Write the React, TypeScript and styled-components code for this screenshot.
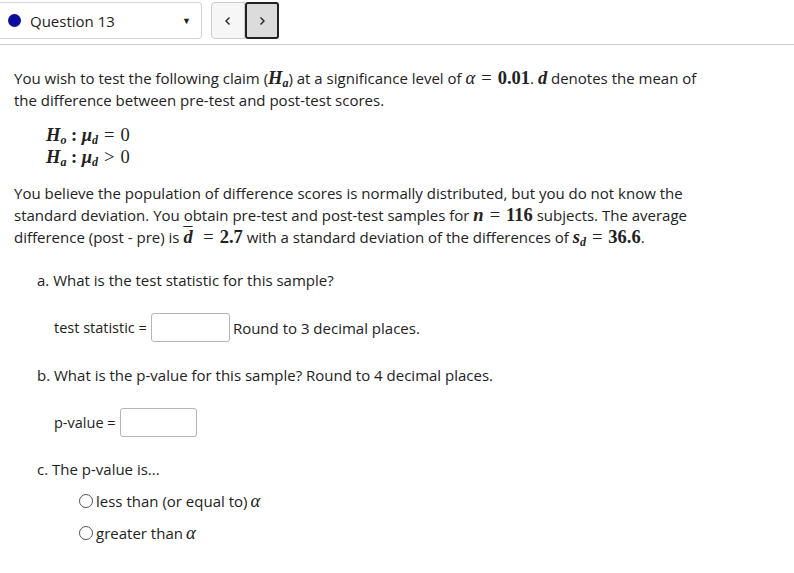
import React from "react";
import styled, { createGlobalStyle } from "styled-components";

const GlobalStyle = createGlobalStyle`
  body {
    margin: 0;
    background: #fff;
    font-family: "Open Sans", "Noto Sans", sans-serif;
    color: #222;
  }
`;

const SPage = styled.div`
  width: 794px;
  height: 573px;
  overflow: hidden;
`;

const SHeader = styled.div`
  display: flex;
  align-items: center;
  gap: 9px;
  height: 37px;
  padding-top: 2px;
  padding-bottom: 5px;
  border-bottom: 1px solid #ccc;
`;

const SSelect = styled.div`
  box-sizing: border-box;
  width: 202px;
  height: 37px;
  display: flex;
  align-items: center;
  padding: 0 10px 0 8px;
  border: 1px solid #d4d4d4;
  border-left: none;
  border-radius: 0 4px 4px 0;
  font-size: 15px;
  color: #222;
`;

const SDot = styled.span`
  width: 13px;
  height: 13px;
  border-radius: 50%;
  background: #0b0b9c;
  margin-right: 9px;
`;

const SSelectLabel = styled.span`
  flex: 1;
`;

const SCaret = styled.span`
  font-size: 9px;
  color: #222;
`;

const SNav = styled.div`
  display: flex;
  height: 37px;
`;

const SNavButton = styled.div<{ active?: boolean }>`
  box-sizing: border-box;
  width: 34px;
  height: 37px;
  display: flex;
  align-items: center;
  justify-content: center;
  background: ${(p) => (p.active ? "#dcdcdc" : "#f6f6f6")};
  border: ${(p) => (p.active ? "2px solid #222" : "1px solid #ccc")};
  border-radius: ${(p) => (p.active ? "3px" : "4px 0 0 4px")};
  & svg {
    width: 10px;
    height: 10px;
  }
`;

const SBody = styled.div`
  width: 706px;
  padding: 22px 14px 0;
  font-size: 15px;
  line-height: 22px;
`;

const SPara = styled.p`
  margin: 0;
`;

const SMath = styled.span<{ bold?: boolean; italic?: boolean }>`
  font-family: "Liberation Serif", "DejaVu Serif", serif;
  font-size: 18.5px;
  line-height: 1;
  font-weight: ${(p) => (p.bold ? 700 : 400)};
  font-style: ${(p) => (p.italic ? "italic" : "normal")};
`;

const SOp = styled.span`
  font-family: "Liberation Serif", "DejaVu Serif", serif;
  font-size: 18.5px;
  line-height: 1;
  margin: 0 6px;
`;

const SBar = styled.span`
  text-decoration: overline;
`;

const SSub = styled.sub`
  font-size: 12px;
  line-height: 1;
  vertical-align: -3px;
  font-style: italic;
`;

const SHyp = styled.div`
  padding: 13px 0 14px 32px;
`;

const SPart = styled.div`
  padding-left: 23px;
`;

const SQuestion = styled.div<{ top: number }>`
  margin-top: ${(p) => p.top}px;
`;

const SAnswerRow = styled.div`
  display: flex;
  align-items: center;
  gap: 4px;
  margin-top: 22px;
  padding-left: 17px;
  font-size: 14.5px;
`;

const SInput = styled.div<{ w: number }>`
  box-sizing: border-box;
  width: ${(p) => p.w}px;
  height: 29px;
  border: 1px solid #b5b5b5;
  border-radius: 3px;
  background: #fff;
`;

const SHint = styled.span`
  font-size: 15px;
  margin-left: -1px;
`;

const SOptions = styled.div`
  padding-left: 42px;
  margin-top: 10px;
  display: flex;
  flex-direction: column;
  gap: 10px;
`;

const SOption = styled.label`
  display: flex;
  align-items: center;
  gap: 3px;
  line-height: 22px;
`;

const SRadio = styled.span`
  box-sizing: border-box;
  width: 14px;
  height: 14px;
  border-radius: 50%;
  border: 1px solid #555;
  background: #fff;
`;

const Chevron = ({ dir }: { dir: "l" | "r" }) => (
  <svg viewBox="0 0 10 10" fill="none" stroke="#222" strokeWidth="1.4">
    {dir === "l" ? <path d="M6.5 1.5 L3 5 L6.5 8.5" /> : <path d="M3.5 1.5 L7 5 L3.5 8.5" />}
  </svg>
);

const App = () => (
  <SPage>
    <GlobalStyle />
    <SHeader>
      <SSelect>
        <SDot />
        <SSelectLabel>Question 13</SSelectLabel>
        <SCaret>▼</SCaret>
      </SSelect>
      <SNav>
        <SNavButton>
          <Chevron dir="l" />
        </SNavButton>
        <SNavButton active>
          <Chevron dir="r" />
        </SNavButton>
      </SNav>
    </SHeader>
    <SBody>
      <SPara>
        You wish to test the following claim (
        <SMath bold italic>
          H<SSub>a</SSub>
        </SMath>
        ) at a significance level of <SMath italic>α</SMath>
        <SOp>=</SOp>
        <SMath bold>0.01</SMath>. <SMath bold italic>d</SMath> denotes the mean of the difference between
        pre-test and post-test scores.
      </SPara>
      <SHyp>
        <div>
          <SMath bold italic>
            H<SSub>o</SSub>
          </SMath>
          <SMath bold> : </SMath>
          <SMath bold italic>
            μ<SSub>d</SSub>
          </SMath>
          <SOp>=</SOp>
          <SMath>0</SMath>
        </div>
        <div>
          <SMath bold italic>
            H<SSub>a</SSub>
          </SMath>
          <SMath bold> : </SMath>
          <SMath bold italic>
            μ<SSub>d</SSub>
          </SMath>
          <SOp>&gt;</SOp>
          <SMath>0</SMath>
        </div>
      </SHyp>
      <SPara>
        You believe the population of difference scores is normally distributed, but you do not know the
        standard deviation. You obtain pre-test and post-test samples for <SMath bold italic>n</SMath>
        <SOp>=</SOp>
        <SMath bold>116</SMath> subjects. The average difference (post - pre) is{" "}
        <SMath bold italic>
          <SBar>d</SBar>
        </SMath>
        <SOp> =</SOp>
        <SMath bold>2.7</SMath> with a standard deviation of the differences of{" "}
        <SMath bold italic>
          s<SSub>d</SSub>
        </SMath>
        <SOp>=</SOp>
        <SMath bold>36.6</SMath>.
      </SPara>
      <SPart>
        <SQuestion top={21}>a. What is the test statistic for this sample?</SQuestion>
        <SAnswerRow>
          test statistic = <SInput w={79} />
          <SHint>Round to 3 decimal places.</SHint>
        </SAnswerRow>
        <SQuestion top={22}>b. What is the p-value for this sample? Round to 4 decimal places.</SQuestion>
        <SAnswerRow>
          p-value = <SInput w={77} />
        </SAnswerRow>
        <SQuestion top={21}>c. The p-value is...</SQuestion>
        <SOptions>
          <SOption>
            <SRadio />
            less than (or equal to) <SMath italic>α</SMath>
          </SOption>
          <SOption>
            <SRadio />
            greater than <SMath italic>α</SMath>
          </SOption>
        </SOptions>
      </SPart>
    </SBody>
  </SPage>
);

export default App;
